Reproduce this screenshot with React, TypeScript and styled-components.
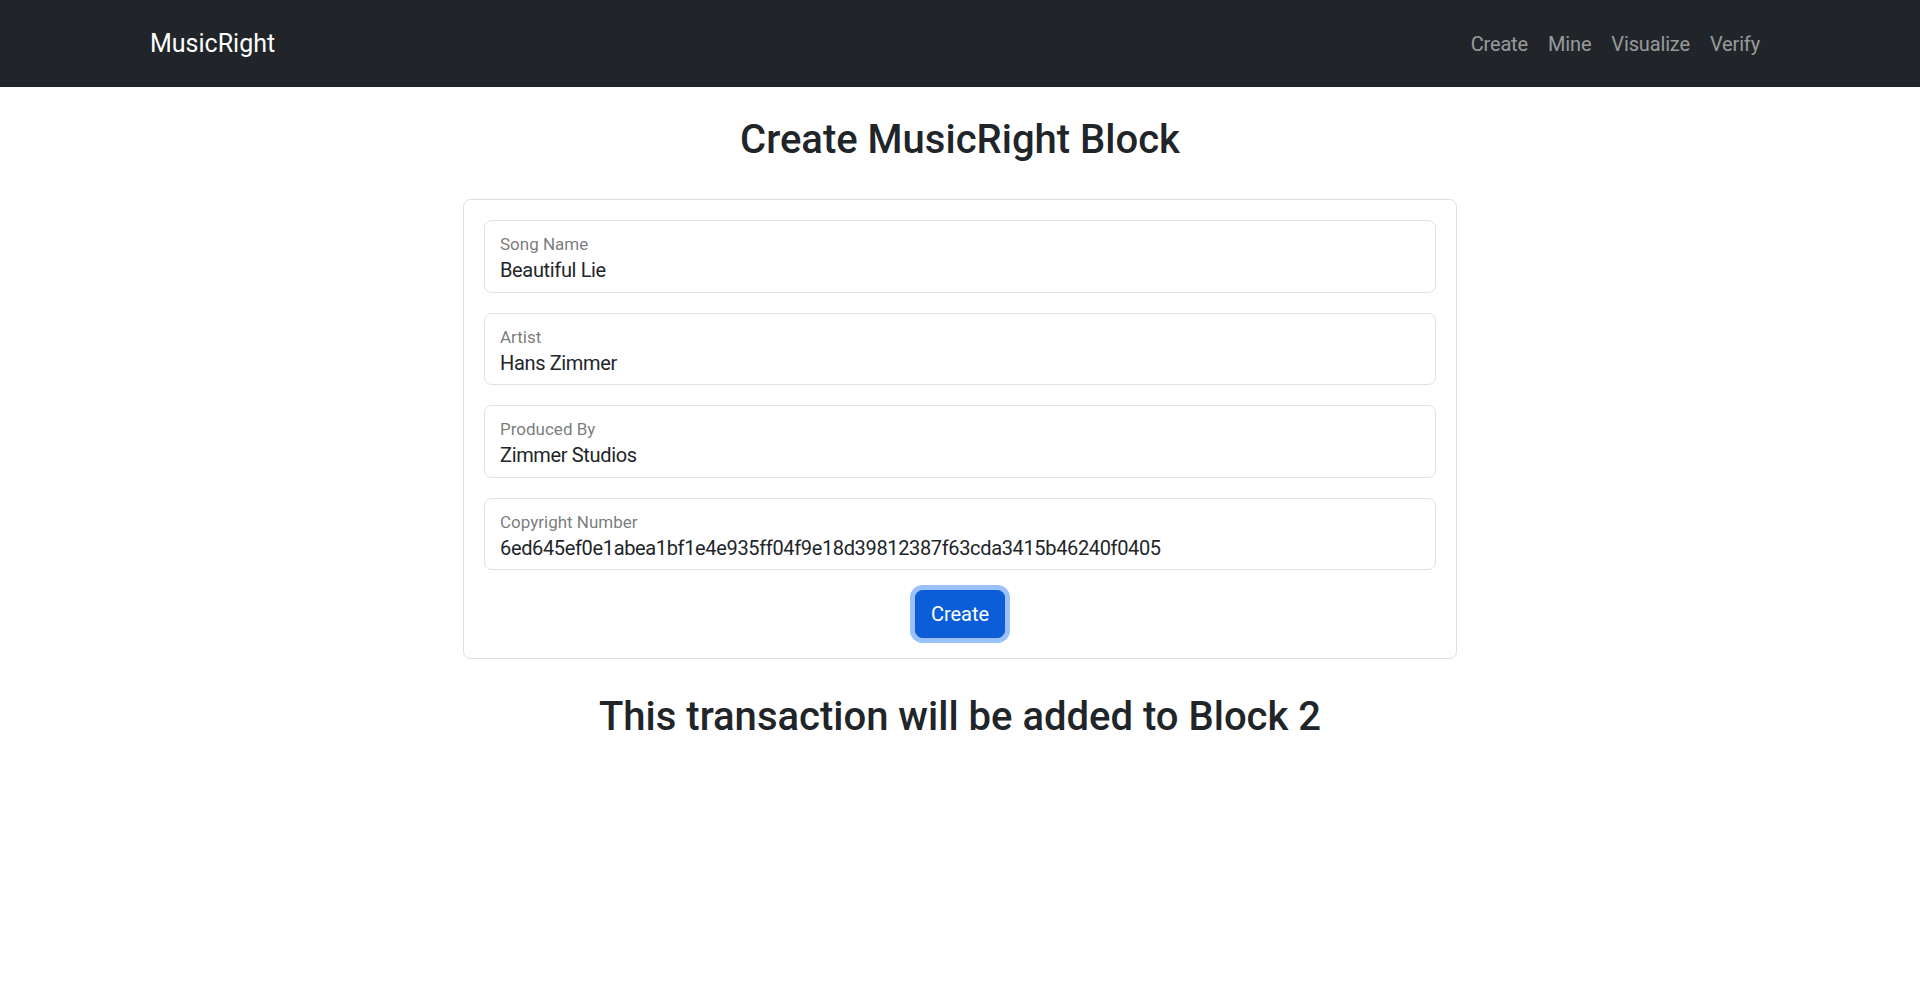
import React from "react";
import styled, { createGlobalStyle } from "styled-components";

const GlobalStyle = createGlobalStyle`
  * { box-sizing: border-box; }
  html, body { margin: 0; padding: 0; background: #ffffff; }
  body {
    font-family: Roboto, "Noto Sans", "Liberation Sans", sans-serif;
    color: #212529;
    -webkit-font-smoothing: antialiased;
  }
`;

const Navbar = styled.nav`
  height: 87px;
  background: #212529;
  display: flex;
  align-items: center;
  justify-content: space-between;
  padding: 0 150px 0 150px;
`;

const Brand = styled.a`
  font-size: 25px;
  line-height: 1.5;
  color: #ffffff;
  text-decoration: none;
`;

const NavList = styled.ul`
  display: flex;
  list-style: none;
  margin: 0;
  padding: 0;
`;

const NavLink = styled.a`
  display: block;
  padding: 10px 10px;
  font-size: 20px;
  line-height: 1.5;
  letter-spacing: -0.15px;
  color: rgba(255, 255, 255, 0.55);
  text-decoration: none;
`;

const Main = styled.main`
  display: flex;
  flex-direction: column;
  align-items: center;
`;

const Heading = styled.h1<{ $top: number; $bottom: number }>`
  margin: ${(p) => p.$top}px 0 ${(p) => p.$bottom}px;
  font-size: 40px;
  font-weight: 500;
  line-height: 48px;
  text-align: center;
`;

const Card = styled.form`
  width: 994px;
  border: 1px solid #dcdfe2;
  border-radius: 7.5px;
  padding: 20px;
  display: flex;
  flex-direction: column;
  gap: 20px;
`;

const Field = styled.div`
  height: 72.5px;
  border: 1px solid #dee2e6;
  border-radius: 7.5px;
  padding: 13px 15px 0 15px;
  display: flex;
  flex-direction: column;
  gap: 4px;
`;

const FieldLabel = styled.label`
  font-size: 17px;
  line-height: 20px;
  color: rgba(33, 37, 41, 0.62);
`;

const FieldValue = styled.div`
  font-size: 20px;
  line-height: 24px;
  letter-spacing: -0.35px;
  color: #212529;
  white-space: nowrap;
`;

const ButtonRow = styled.div`
  display: flex;
  justify-content: center;
`;

const PrimaryButton = styled.button`
  font-family: inherit;
  font-size: 20px;
  line-height: 30px;
  color: #ffffff;
  background: #0b5ed7;
  border: 1px solid #0a58ca;
  border-radius: 7.5px;
  padding: 8px 15px;
  box-shadow: 0 0 0 5px rgba(49, 132, 253, 0.5);
  cursor: pointer;
`;

const fields = [
  { label: "Song Name", value: "Beautiful Lie" },
  { label: "Artist", value: "Hans Zimmer" },
  { label: "Produced By", value: "Zimmer Studios" },
  {
    label: "Copyright Number",
    value: "6ed645ef0e1abea1bf1e4e935ff04f9e18d39812387f63cda3415b46240f0405",
  },
];

const links = ["Create", "Mine", "Visualize", "Verify"];

export default function App() {
  return (
    <>
      <GlobalStyle />
      <Navbar>
        <Brand href="#">MusicRight</Brand>
        <NavList>
          {links.map((l) => (
            <li key={l}>
              <NavLink href="#">{l}</NavLink>
            </li>
          ))}
        </NavList>
      </Navbar>
      <Main>
        <Heading $top={29} $bottom={35}>Create MusicRight Block</Heading>
        <Card onSubmit={(e) => e.preventDefault()}>
          {fields.map((f) => (
            <Field key={f.label}>
              <FieldLabel>{f.label}</FieldLabel>
              <FieldValue>{f.value}</FieldValue>
            </Field>
          ))}
          <ButtonRow>
            <PrimaryButton type="submit">Create</PrimaryButton>
          </ButtonRow>
        </Card>
        <Heading $top={34} $bottom={0}>This transaction will be added to Block 2</Heading>
      </Main>
    </>
  );
}
